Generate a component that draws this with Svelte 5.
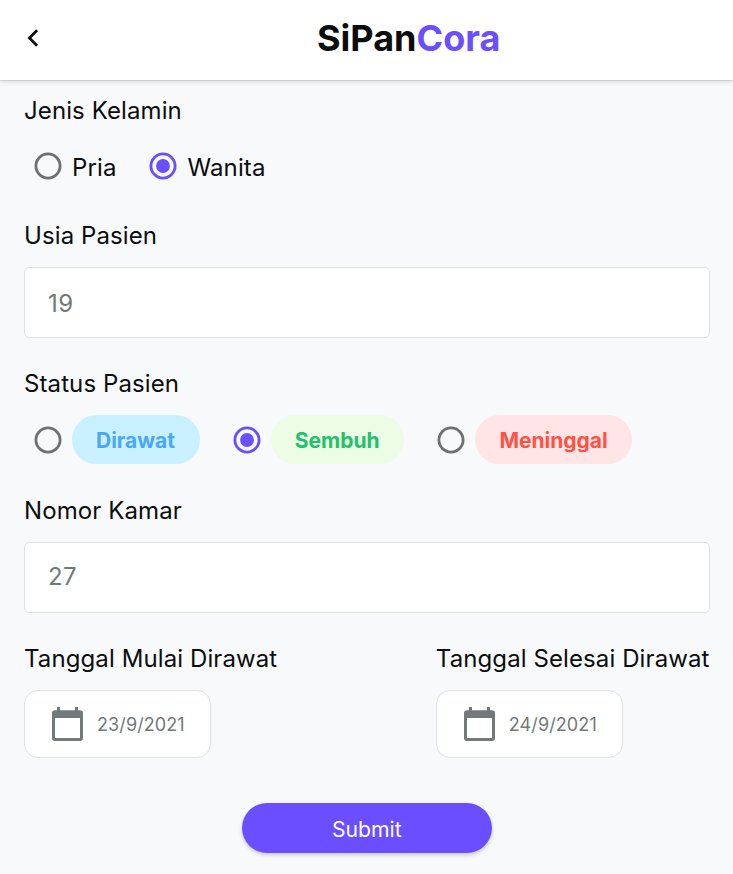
<script>
  let gender = $state('Wanita');
  let status = $state('Sembuh');
  let age = $state('');
  let room = $state('');
  const genders = ['Pria', 'Wanita'];
  const statuses = [
    { name: 'Dirawat', tone: 'blue' },
    { name: 'Sembuh', tone: 'green' },
    { name: 'Meninggal', tone: 'red' }
  ];
  const dates = [
    { label: 'Tanggal Mulai Dirawat', value: '23/9/2021' },
    { label: 'Tanggal Selesai Dirawat', value: '24/9/2021' }
  ];
</script>

{#snippet radio(on)}
  <svg class="radio" class:on viewBox="0 0 28 28" aria-hidden="true">
    <circle cx="14" cy="14" r="12.1" fill="none" stroke="currentColor" stroke-width="2.8" />
    {#if on}<circle cx="14" cy="14" r="6.900" fill="currentColor" />{/if}
  </svg>
{/snippet}

<div class="page">
  <header>
    <button class="back" aria-label="Kembali">
      <svg viewBox="0 0 12 18"><path d="M10.100 1.200 2.400 9 10.100 16.800" fill="none" stroke="#0b0d0d" stroke-width="2.7" /></svg>
    </button>
    <h1>SiPan<span>Cora</span></h1>
  </header>

  <main>
    <div class="label">Jenis Kelamin</div>
    <div class="row genders">
      {#each genders as g}
        <button class="option" onclick={() => (gender = g)}>
          {@render radio(gender === g)}<span class="name">{g}</span>
        </button>
      {/each}
    </div>

    <div class="label">Usia Pasien</div>
    <input class="field age" placeholder="19" bind:value={age} />

    <div class="label">Status Pasien</div>
    <div class="row statuses">
      {#each statuses as s}
        <button class="option" onclick={() => (status = s.name)}>
          {@render radio(status === s.name)}<span class="pill {s.tone}">{s.name}</span>
        </button>
      {/each}
    </div>

    <div class="label">Nomor Kamar</div>
    <input class="field room" placeholder="27" bind:value={room} />

    <div class="dates">
      {#each dates as d}
        <div>
          <div class="label">{d.label}</div>
          <button class="date">
            <svg viewBox="0 0 31 34" aria-hidden="true">
              <path fill="#72797a" fill-rule="evenodd" d="M5 0h3v3.2h15V0h3v3.2h2a3 3 0 0 1 3 3V31a3 3 0 0 1-3 3H3a3 3 0 0 1-3-3V6.200a3 3 0 0 1 3-3h2zM3 11v20h25V11z" />
            </svg>
            <span>{d.value}</span>
          </button>
        </div>
      {/each}
    </div>

    <button class="submit">Submit</button>
  </main>
</div>

<style>
  :global(body) { margin: 0; background: #f8f9fb; }
  .page {
    height: 874px;
    overflow: hidden;
    background: #f8f9fb;
    color: #0b0d0d;
    font-family: Inter, sans-serif;
    font-size: 24px;
  }
  button {
    border: 0;
    padding: 0;
    margin: 0;
    background: none;
    font: inherit;
    color: inherit;
    letter-spacing: inherit;
  }
  header {
    position: relative;
    display: flex;
    align-items: center;
    box-sizing: border-box;
    height: 80px;
    padding: 0 24px 4px 27px;
    background: #fff;
    box-shadow: 0 1px 1px rgba(0, 0, 0, 0.1), 0 2px 5px rgba(0, 0, 0, 0.1);
  }
  .back { display: flex; }
  .back svg { width: 12px; height: 18px; }
  h1 {
    margin: 0 0 0 278px;
    font-size: 36px;
    line-height: 44px;
    font-weight: 700;
  }
  h1 span { color: #6b4eff; }
  main {
    display: flex;
    flex-direction: column;
    padding: 17px 23.500px 0 24px;
  }
  .label { line-height: 28px; letter-spacing: 0.1px; white-space: nowrap; }
  .row { display: flex; padding-left: 10px; }
  .option { display: flex; align-items: center; }
  .radio { width: 28px; height: 28px; color: #6f7072; flex: none; }
  .radio.on { color: #6b4eff; }
  .genders { gap: 32.900px; margin: 27px 0 42px; }
  .name { margin-left: 10px; line-height: 28px; padding-top: 4px; letter-spacing: 0.13px; }
  .genders .option { height: 28px; }
  .field {
    box-sizing: border-box;
    width: 100%;
    height: 71.500px;
    padding: 1px 23px 0;
    border: 1px solid #dfe2e2;
    border-radius: 5px;
    background: #fff;
    font: 24px Inter, sans-serif;
    letter-spacing: 0.45px;
    outline: 0;
  }
  .field::placeholder { color: #72797a; opacity: 1; }
  .age { margin: 16.500px 0 32px; padding-top: 2px; }
  .room { margin: 16.500px 0 32px; padding: 0 23px 1px; }
  .statuses { gap: 33.100px; margin: 17px 0 33px; }
  .pill {
    margin-left: 10px;
    padding: 2px 24.700px 0 24px;
    line-height: 47px;
    border-radius: 25px;
    font-size: 21px;
    font-weight: 700;
  }
  .blue { background: #c9f0ff; color: #48a7f8; }
  .green { background: #ecfce5; color: #23c16b; }
  .red { background: #ffe5e5; color: #ff5247; }
  .dates { display: flex; justify-content: space-between; }
  .date {
    display: flex;
    align-items: center;
    box-sizing: border-box;
    width: 187px;
    height: 68px;
    margin-top: 17px;
    padding-left: 27px;
    border: 1px solid #dfe2e2;
    border-radius: 14px;
    background: #fff;
    color: #72797a;
    font-size: 18px;
    letter-spacing: 0.1px;
  }
  .date svg { width: 31px; height: 34px; margin-right: 14px; }
  .submit {
    align-self: center;
    width: 250px;
    height: 50px;
    margin-top: 45px;
    padding-top: 2px;
    border-radius: 25px;
    background: #6b4eff;
    box-shadow: 0 2px 4px rgba(0, 0, 0, 0.2);
    color: #fff;
    font-size: 21.200px;
  }
</style>
